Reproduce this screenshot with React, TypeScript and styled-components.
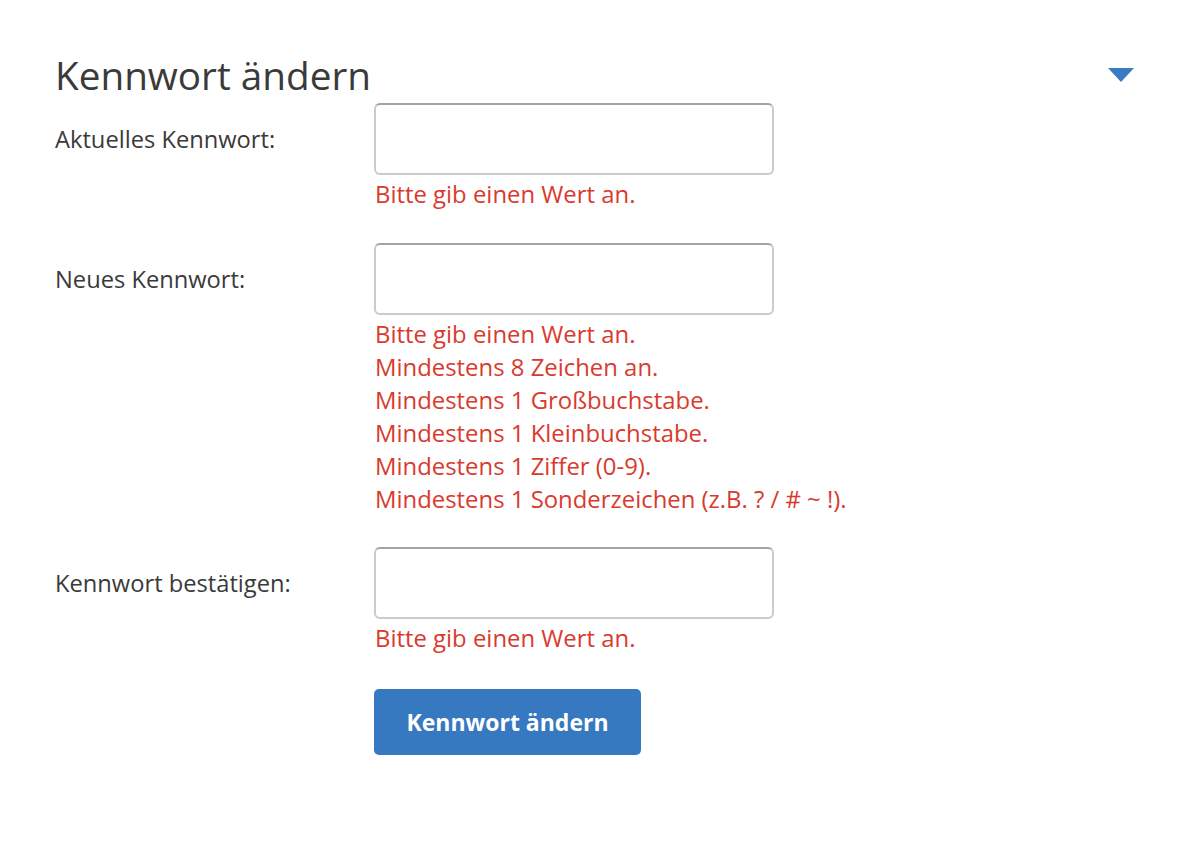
import React from 'react';
import styled, {createGlobalStyle} from "styled-components";

const GlobalStyle = createGlobalStyle`
  body {
    margin: 0;
    background: #fff;
    font-family: "Open Sans", "Liberation Sans", sans-serif;
    color: #3a3a3a;
  }
`

const Page = styled.div`
  padding: 47px 52px 0 55px;
`

const Header = styled.div`
  display: flex;
  justify-content: space-between;
  align-items: center;
  height: 56px;
`

const Title = styled.h2`
  margin: 0;
  font-size: 38.7px;
  font-weight: 400;
  line-height: 56px;
  color: #3a3a3a;
`

const Caret = styled.div`
  width: 0;
  height: 0;
  border-left: 13.5px solid transparent;
  border-right: 13.5px solid transparent;
  border-top: 14px solid #3a7bc4;
  margin-top: -1px;
`

const Form = styled.form`
  display: flex;
  flex-direction: column;
`

const Row = styled.div`
  display: grid;
  grid-template-columns: 319px 400px;
  margin-bottom: ${props => props.gap}px;
`

const Label = styled.label`
  grid-column: 1;
  grid-row: 1;
  align-self: center;
  font-size: 23.7px;
  color: #3a3a3a;
  line-height: 30px;
`

const Input = styled.input`
  grid-column: 2;
  grid-row: 1;
  box-sizing: border-box;
  width: 400px;
  height: 72px;
  border: 2px solid #cbcbcb;
  border-top-color: #a3a3a3;
  border-radius: 6px;
  background: #fff;
  font-size: 21px;
  padding: 0 14px;
  outline: none;
`

const Errors = styled.div`
  grid-column: 2;
  grid-row: 2;
  width: 600px;
  padding-top: 2px;
  padding-left: 1px;
`

const Error = styled.div`
  font-size: 23.9px;
  line-height: 33px;
  color: #d93a2e;
  white-space: nowrap;
`

const ButtonRow = styled.div`
  padding-left: 319px;
`

const Submit = styled.button`
  height: 66px;
  width: 267px;
  border: none;
  border-radius: 5px;
  background: #3779c1;
  color: #fff;
  font-family: "Open Sans", "Liberation Sans", sans-serif;
  font-weight: 700;
  font-size: 23px;
  cursor: pointer;
`

interface Field {
    id: string;
    label: string;
    errors: string[];
    gap: number;
}

const required = 'Bitte gib einen Wert an.';

const fields: Field[] = [
    {id: 'current', label: 'Aktuelles Kennwort:', errors: [required], gap: 33},
    {
        id: 'new', label: 'Neues Kennwort:', errors: [
            required,
            'Mindestens 8 Zeichen an.',
            'Mindestens 1 Großbuchstabe.',
            'Mindestens 1 Kleinbuchstabe.',
            'Mindestens 1 Ziffer (0-9).',
            'Mindestens 1 Sonderzeichen (z.B. ? / # ~ !).',
        ], gap: 32
    },
    {id: 'confirm', label: 'Kennwort bestätigen:', errors: [required], gap: 35},
];

function App() {
    return (
        <Page>
            <GlobalStyle/>
            <Header>
                <Title>Kennwort ändern</Title>
                <Caret/>
            </Header>
            <Form onSubmit={e => e.preventDefault()}>
                {fields.map(field => (
                    <Row key={field.id} gap={field.gap}>
                        <Label htmlFor={field.id}>{field.label}</Label>
                        <Input id={field.id} type="password"/>
                        <Errors>
                            {field.errors.map(err => <Error key={err}>{err}</Error>)}
                        </Errors>
                    </Row>
                ))}
                <ButtonRow>
                    <Submit type="submit">Kennwort ändern</Submit>
                </ButtonRow>
            </Form>
        </Page>
    );
}

export default App;
